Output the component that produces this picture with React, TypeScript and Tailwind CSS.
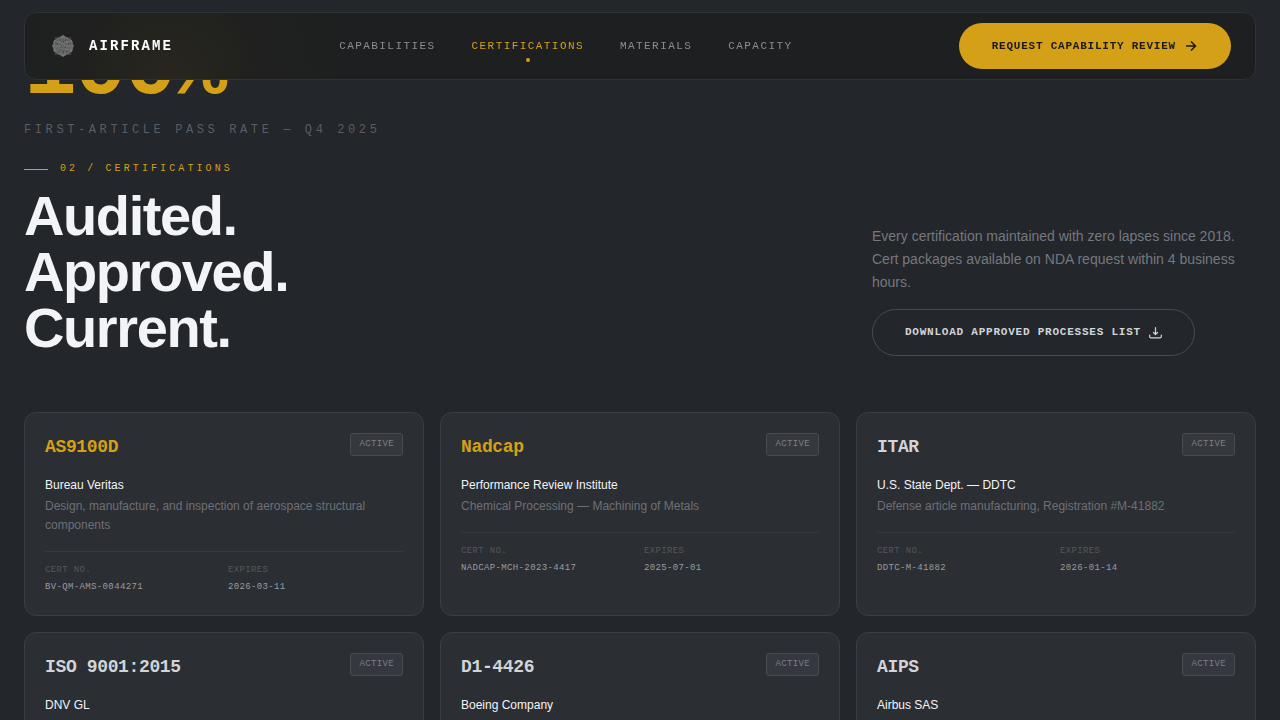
import React from "react";

interface Cert {
  code: string;
  issuer: string;
  scope: string;
  certNo: string;
  expires: string;
  primary?: boolean;
}

const links = ["Capabilities", "Certifications", "Materials", "Capacity"];

const certs: Cert[] = [
  {
    code: "AS9100D",
    issuer: "Bureau Veritas",
    scope: "Design, manufacture, and inspection of aerospace structural components",
    certNo: "BV-QM-AMS-0044271",
    expires: "2026-03-11",
    primary: true,
  },
  {
    code: "Nadcap",
    issuer: "Performance Review Institute",
    scope: "Chemical Processing — Machining of Metals",
    certNo: "NADCAP-MCH-2023-4417",
    expires: "2025-07-01",
    primary: true,
  },
  {
    code: "ITAR",
    issuer: "U.S. State Dept. — DDTC",
    scope: "Defense article manufacturing, Registration #M-41882",
    certNo: "DDTC-M-41882",
    expires: "2026-01-14",
  },
  {
    code: "ISO 9001:2015",
    issuer: "DNV GL",
    scope: "Quality management systems",
    certNo: "DNV-QMS-20871",
    expires: "2026-09-30",
  },
  {
    code: "D1-4426",
    issuer: "Boeing Company",
    scope: "Approved process sources",
    certNo: "D1-4426-7719",
    expires: "2026-05-18",
  },
  {
    code: "AIPS",
    issuer: "Airbus SAS",
    scope: "Airbus process specifications",
    certNo: "AIPS-03-1180",
    expires: "2026-08-22",
  },
];

function Logo() {
  return (
    <svg width="24" height="24" viewBox="0 0 24 24" fill="none" aria-hidden="true">
      <path
        d="M12 1 L15 3 L20 3 L20.500 7 L23 12 L20.500 17 L20 21 L15 21 L12 23 L9 21 L4 21 L3.500 17 L1 12 L3.500 7 L4 3 L9 3 Z"
        fill="#3c3d3d"
      />
      <path d="M12 1 L21 6.500 L22.500 12 L21 17.500 L12 23 L3 17.500 L1.500 12 L3 6.500 Z" fill="#5e5f60" />
      <path
        d="M12 2 L21 7 L21 17 L12 22 L3 17 L3 7 Z M12 2 L16.500 9.500 L21 17 L12 14.500 L3 17 L7.500 9.500 Z M3 7 L12 9 L21 7 M12 9 L16.500 14 L12 22 L7.500 14 Z M1 12 H23"
        stroke="#828384"
        strokeWidth="0.600"
      />
      <path
        d="M9 6 H10 M14 6 H15 M12 8 H13 M6 10 H7 M17 10 H18 M10 12 H11 M14 13 H15 M8 16 H9 M15 17 H16 M12 18 H13"
        stroke="#333435"
      />
    </svg>
  );
}

function ArrowIcon() {
  return (
    <svg width="14" height="14" viewBox="0 0 14 14" fill="none" stroke="currentColor" strokeWidth="1.500" aria-hidden="true">
      <path d="M2 7 H11.500 M7 2.500 L11.500 7 L7 11.500" />
    </svg>
  );
}

function DownloadIcon() {
  return (
    <svg
      width="13"
      height="13"
      viewBox="0 0 13 13"
      fill="none"
      stroke="currentColor"
      strokeWidth="1.200"
      strokeLinecap="round"
      strokeLinejoin="round"
      aria-hidden="true"
    >
      <path d="M6.500 1.500 V8.500 M4.500 6.500 L6.500 8.500 L8.500 6.500 M0.700 9 V10.500 Q0.700 11.800 2 11.800 H11 Q12.300 11.800 12.300 10.500 V9" />
    </svg>
  );
}

function NavBar() {
  return (
    <header className="fixed inset-x-6 top-3 z-10 flex items-center justify-between rounded-xl border border-[#2f3335] bg-[#1e1f20] bg-[radial-gradient(circle_at_145px_65px,#28261e_0px,#1f201f_100px,#1e1f20_180px)] py-[10px] pr-6 pl-[26px]">
      <a href="#top" className="flex items-center gap-[14px] text-sm leading-5 font-bold tracking-[0.15em] text-white">
        <Logo />
        AIRFRAME
      </a>
      <nav className="flex gap-9 text-[11px] leading-4 tracking-[0.13em] text-[#8b8d90] uppercase">
        {links.map((link) => {
          const active = link === "Certifications";
          return (
            <a key={link} href={`#${link.toLowerCase()}`} className={active ? "relative text-[#d4a017]" : "relative"}>
              {link}
              {active && (
                <span className="absolute top-5 left-1/2 size-1 -translate-x-1/2 rounded-full bg-[#d4a017]" />
              )}
            </a>
          );
        })}
      </nav>
      <button className="flex h-[46px] items-center gap-2 rounded-full bg-[#d4a017] px-[33px] text-[11px] font-bold tracking-[0.07em] text-[#1b1a16] uppercase">
        Request Capability Review
        <ArrowIcon />
      </button>
    </header>
  );
}

function CertCard({ cert }: { cert: Cert }) {
  return (
    <article className="rounded-xl border border-[#3a3d42] bg-[#2b2e33] p-5">
      <div className="mb-5 flex h-6 items-start justify-between">
        <h3
          className={
            cert.primary
              ? "pt-1 text-lg leading-5 font-bold tracking-[-0.02em] text-[#d4a017]"
              : "pt-1 text-lg leading-5 font-bold tracking-[-0.02em] text-[#d1d4d8]"
          }
        >
          {cert.code}
        </h3>
        <span className="h-[23px] rounded-[3px] border border-[#474a50] bg-[#35383e] px-2 text-[9px] leading-5 tracking-[0.04em] text-[#7c7f84] uppercase">
          Active
        </span>
      </div>
      <div className="font-['Liberation_Sans',Arial,sans-serif] text-xs">
        <p className="mb-1 leading-4 text-[#f3f4f6]">{cert.issuer}</p>
        <p className="leading-[19px] text-[#6d7076]">{cert.scope}</p>
      </div>
      <dl className="mt-4 grid grid-cols-2 gap-2 border-t border-[#36393e] pt-3 text-[9px] tracking-[0.04em]">
        <div>
          <dt className="leading-3 text-[#54575c] uppercase">Cert No.</dt>
          <dd className="mt-1 leading-[15px] text-[#9a9ca0]">{cert.certNo}</dd>
        </div>
        <div>
          <dt className="leading-3 text-[#54575c] uppercase">Expires</dt>
          <dd className="mt-1 leading-[15px] text-[#9a9ca0]">{cert.expires}</dd>
        </div>
      </dl>
    </article>
  );
}

export default function App() {
  return (
    <div id="top" className="min-h-screen bg-[#23262b] font-['Liberation_Mono','Courier_New',monospace]">
      <NavBar />
      <main className="px-6 pt-[26px] pb-16">
        <p className="text-[88px] leading-none font-bold tracking-[-0.03em] text-[#d4a017]">100%</p>
        <p className="mt-[6px] text-xs leading-5 tracking-[0.3em] text-[#5a5d62] uppercase">
          First-Article Pass Rate — Q4 2025
        </p>
        <section id="certifications" className="mt-5">
          <p className="flex items-center gap-3 text-[10px] leading-[18px] tracking-[0.31em] text-[#d4a017] uppercase">
            <span className="h-px w-6 bg-[#d4a017]" />
            02 / Certifications
          </p>
          <div className="mt-[10px] flex items-end justify-between font-['Liberation_Sans',Arial,sans-serif]">
            <h2 className="text-[56px] leading-none font-bold tracking-[-0.025em] text-[#f3f4f8]">
              Audited.
              <br />
              Approved.
              <br />
              Current.
            </h2>
            <div className="w-sm">
              <p className="text-sm leading-[23px] text-[#75787e]">
                Every certification maintained with zero lapses since 2018. Cert packages available on NDA request
                within 4 business hours.
              </p>
              <button className="mt-[15px] flex h-[47px] items-center gap-2 rounded-full border border-[#474a4f] px-8 font-['Liberation_Mono','Courier_New',monospace] text-[11px] font-bold tracking-[0.07em] text-[#d1d4d8] uppercase">
                Download Approved Processes List
                <DownloadIcon />
              </button>
            </div>
          </div>
          <div className="mt-14 grid grid-cols-3 gap-4">
            {certs.map((cert) => (
              <CertCard key={cert.code} cert={cert} />
            ))}
          </div>
        </section>
      </main>
    </div>
  );
}
